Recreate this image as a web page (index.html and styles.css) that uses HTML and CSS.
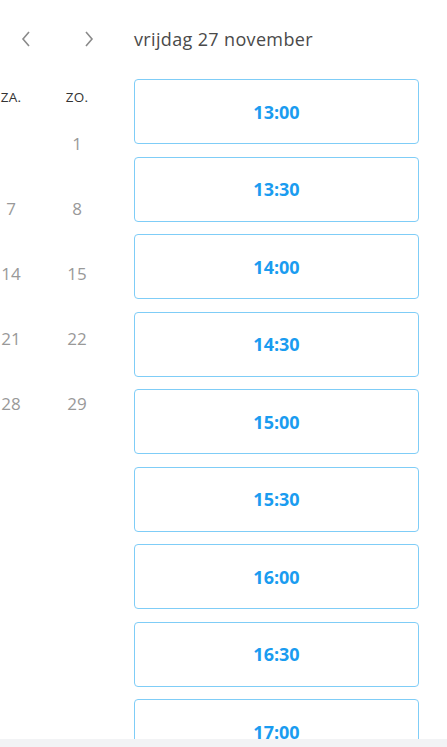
FILE: index.html
```html
<!doctype html>
<html lang="nl">

<head>
    <meta charset="utf-8">
    <meta name="viewport" content="width=device-width, initial-scale=1">
    <title>afspraak plannen</title>
    <link rel="stylesheet" href="styles.css">
</head>

<body>

    <div class="pagina">
        <div class="kalender">
            <div class="navigatie">
                <a href="javascript:void(0)" class="pijl" title="Vorige maand">
                    <svg width="10" height="16" viewBox="0 0 10 16"><path d="M8 1 L2 8 L8 15" fill="none" stroke="#8a8a8a" stroke-width="1.6"/></svg>
                </a>
                <a href="javascript:void(0)" class="pijl" title="Volgende maand">
                    <svg width="10" height="16" viewBox="0 0 10 16"><path d="M2 1 L8 8 L2 15" fill="none" stroke="#8a8a8a" stroke-width="1.6"/></svg>
                </a>
            </div>
            <div class="raster">
                <span class="dag">MA.</span><span class="dag">DI.</span><span class="dag">WO.</span><span class="dag">DO.</span><span class="dag">VR.</span><span class="dag">ZA.</span><span class="dag">ZO.</span>
                <span></span><span></span><span></span><span></span><span></span><span></span><span class="nr">1</span>
                <span class="nr">2</span><span class="nr">3</span><span class="nr">4</span><span class="nr">5</span><span class="nr">6</span><span class="nr">7</span><span class="nr">8</span>
                <span class="nr">9</span><span class="nr">10</span><span class="nr">11</span><span class="nr">12</span><span class="nr">13</span><span class="nr">14</span><span class="nr">15</span>
                <span class="nr">16</span><span class="nr">17</span><span class="nr">18</span><span class="nr">19</span><span class="nr">20</span><span class="nr">21</span><span class="nr">22</span>
                <span class="nr">23</span><span class="nr">24</span><span class="nr">25</span><span class="nr">26</span><span class="nr">27</span><span class="nr">28</span><span class="nr">29</span>
            </div>
        </div>

        <div class="tijden">
            <h2>vrijdag 27 november</h2>
            <ul>
                <li><a href="javascript:void(0)">13:00</a></li>
                <li><a href="javascript:void(0)">13:30</a></li>
                <li><a href="javascript:void(0)">14:00</a></li>
                <li><a href="javascript:void(0)">14:30</a></li>
                <li><a href="javascript:void(0)">15:00</a></li>
                <li><a href="javascript:void(0)">15:30</a></li>
                <li><a href="javascript:void(0)">16:00</a></li>
                <li><a href="javascript:void(0)">16:30</a></li>
                <li><a href="javascript:void(0)">17:00</a></li>
            </ul>
        </div>
    </div>

    <div class="schuifbalk"></div>

</body>

</html>
```

FILE: styles.css
```css
html,
body {
    margin: 0;
    padding: 0;
    height: 100%;
    overflow: hidden;
    background-color: #fff;
    font-family: "Open Sans", Arial, sans-serif;
}

body {
    display: flex;
    flex-direction: column;
}

.pagina {
    flex: 1;
    display: flex;
    overflow: hidden;
}

.kalender {
    width: 110px;
    flex-shrink: 0;
    overflow: hidden;
    direction: rtl;
}

.navigatie {
    direction: ltr;
    display: flex;
    gap: 53px;
    padding: 30px 0 0 21px;
    height: 32px;
}

.pijl {
    display: block;
    height: 16px;
}

.raster {
    direction: ltr;
    width: 462px;
    display: grid;
    grid-template-columns: repeat(7, 66px);
    grid-template-rows: 18px;
    grid-auto-rows: 65px;
    margin-top: 26px;
}

.raster span {
    text-align: center;
}

.dag {
    font-size: 13.5px;
    color: #333;
    line-height: 18px;
    letter-spacing: 0.3px;
}

.nr {
    font-size: 17px;
    color: #999;
    line-height: 22px;
    padding-top: 27px;
}

.tijden {
    flex: 1;
    padding-left: 24px;
}

h2 {
    margin: 0;
    padding-top: 27px;
    font-size: 18px;
    font-weight: normal;
    color: #4a4a4a;
    line-height: 24px;
    letter-spacing: 0.35px;
}

ul {
    list-style: none;
    margin: 28px 0 0 0;
    padding: 0;
    width: 285px;
}

li {
    margin-bottom: 12.5px;
}

li a {
    display: flex;
    align-items: center;
    justify-content: center;
    box-sizing: border-box;
    height: 65px;
    border: 1px solid #7fcdf7;
    border-radius: 4px;
    text-decoration: none;
    color: #1a9cf0;
    font-weight: bold;
    font-size: 18px;
}

.schuifbalk {
    height: 8px;
    flex-shrink: 0;
    background-color: #f2f3f5;
}
```
